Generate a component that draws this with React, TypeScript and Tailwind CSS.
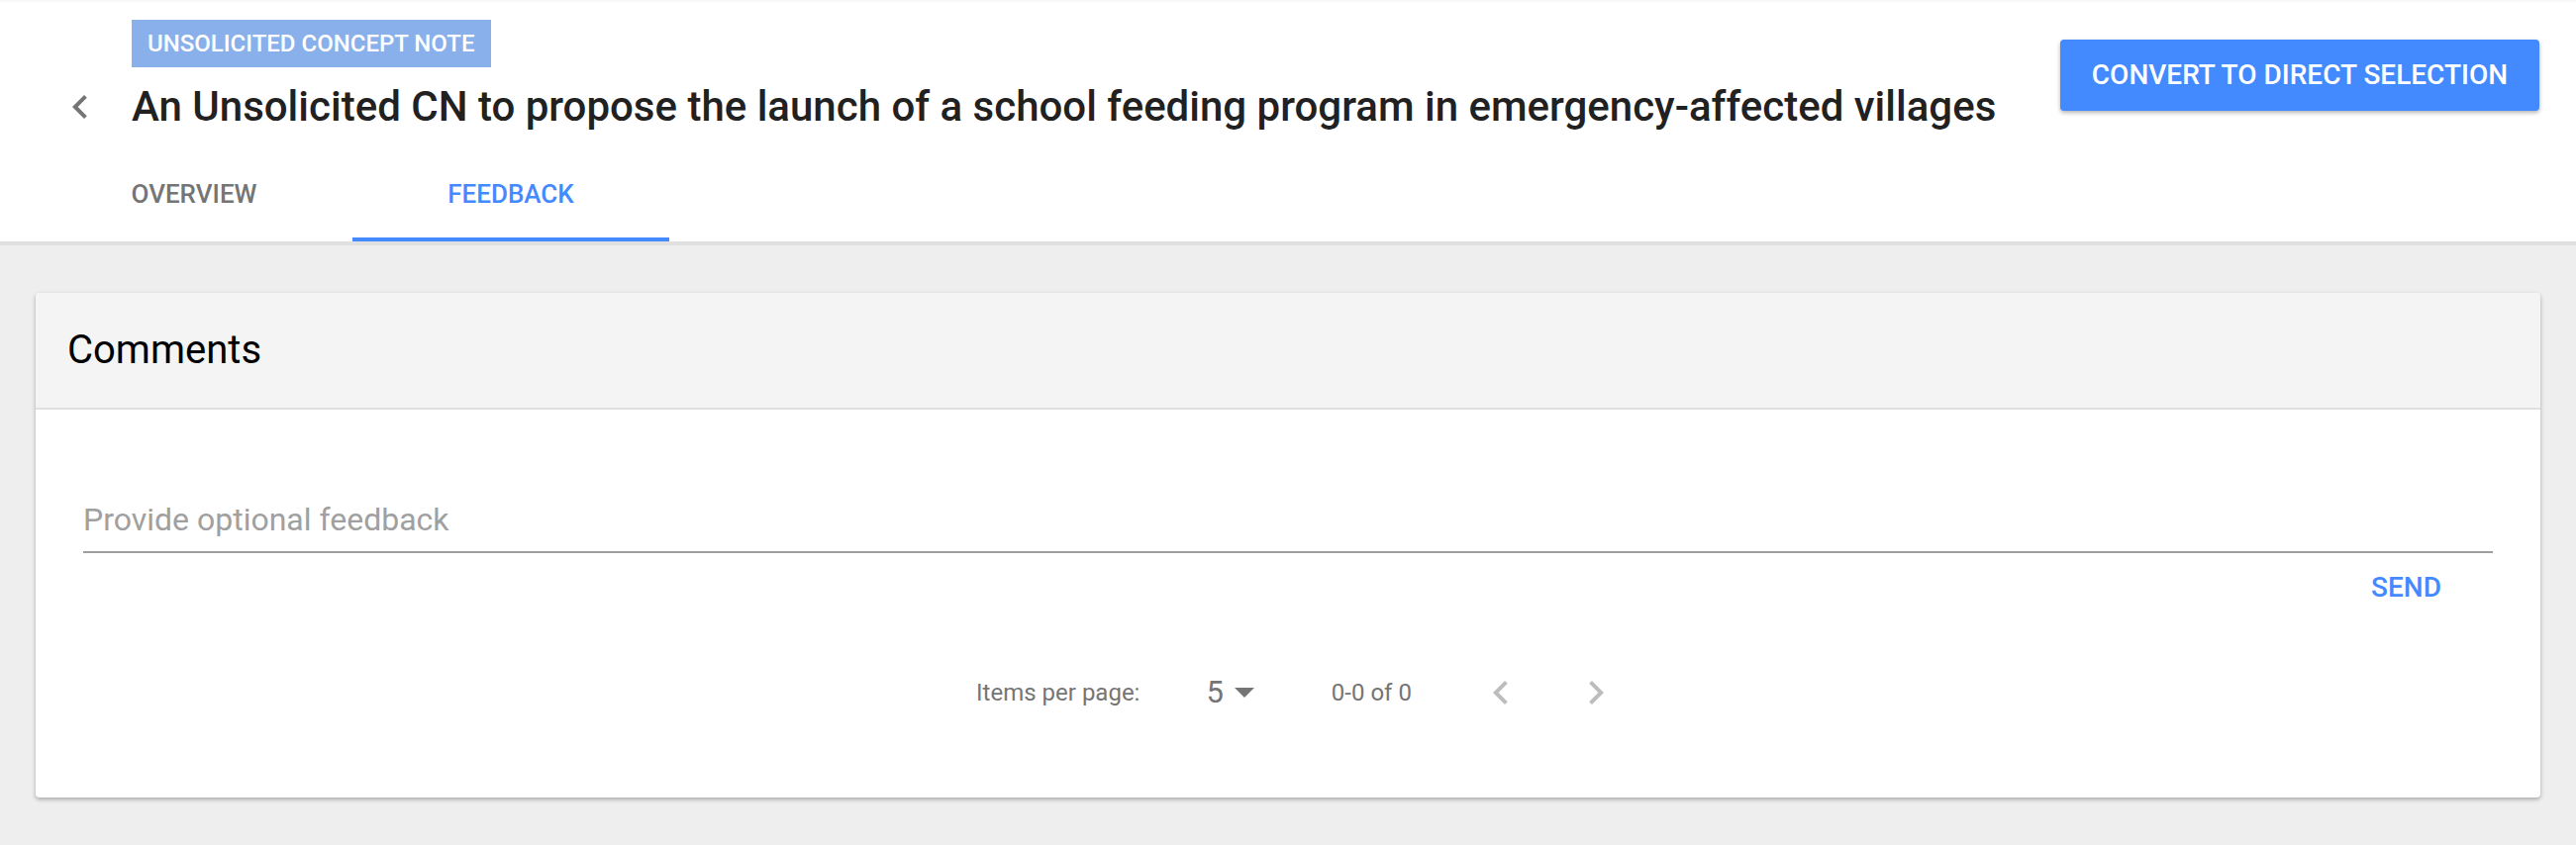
import React from "react";

const ChevronLeft = ({ className = "" }: { className?: string }) => (
  <svg viewBox="0 0 24 24" width="48" height="48" className={className} fill="currentColor">
    <path d="M15.41 7.41L14 6l-6 6 6 6 1.41-1.41L10.83 12z" />
  </svg>
);

const ChevronRight = ({ className = "" }: { className?: string }) => (
  <svg viewBox="0 0 24 24" width="48" height="48" className={className} fill="currentColor">
    <path d="M10 6L8.59 7.41 13.17 12l-4.58 4.59L10 18l6-6z" />
  </svg>
);

export default function App() {
  return (
    <div
      className="w-full h-[854px] bg-[#eeeeee] overflow-hidden"
      style={{ fontFamily: "Roboto, 'Liberation Sans', sans-serif" }}
    >
      <header className="bg-white border-t-2 border-[#f7f7f7] border-b-4 border-b-[#e0e0e0]">
        <div className="flex justify-between">
          <div className="flex flex-col">
            <div className="pl-[133px] pt-[18px]">
              <span className="inline-flex items-center h-[48px] px-[16px] bg-[#89b0ea] text-white text-[24px] font-medium">
                UNSOLICITED CONCEPT NOTE
              </span>
            </div>
            <div className="flex items-center h-[80px]">
              <div className="w-[133px] flex justify-end pr-[28px]">
                <ChevronLeft className="text-[#757575]" />
              </div>
              <h1 className="text-[42px] font-medium text-[#212121] leading-none">
                An Unsolicited CN to propose the launch of a school feeding program in emergency-affected villages
              </h1>
            </div>
          </div>
          <div className="pt-[38px] pr-[37px]">
            <button className="h-[72px] w-[484px] rounded-[4px] bg-[#448aff] text-white text-[28px] font-medium shadow-[0_2px_4px_rgba(0,0,0,0.3)]">
              CONVERT TO DIRECT SELECTION
            </button>
          </div>
        </div>
        <nav className="flex pl-[36px] h-[96px]">
          <div className="w-[320px] flex items-center justify-center text-[26px] font-medium text-[#757575]">
            OVERVIEW
          </div>
          <div className="w-[320px] flex items-center justify-center text-[26px] font-medium text-[#448aff] border-b-4 border-[#448aff] pt-[4px]">
            FEEDBACK
          </div>
        </nav>
      </header>

      <main className="pt-[48px] px-[36px]">
        <div className="bg-white rounded-[4px] shadow-[0_2px_4px_rgba(0,0,0,0.3)] overflow-hidden">
          <div className="h-[118px] bg-[#f4f4f4] border-b-2 border-[#e0e0e0] flex items-center px-[32px]">
            <h2 className="text-[40px] text-black leading-none">Comments</h2>
          </div>
          <div className="px-[48px] pt-[84px]">
            <div className="border-b-2 border-[#9e9e9e] h-[61px] flex items-end pb-[16px]">
              <span className="text-[32px] text-[#a0a0a0] leading-none">Provide optional feedback</span>
            </div>
            <div className="flex justify-end pr-[52px] pt-[21px]">
              <button className="text-[28px] font-medium text-[#448aff] leading-none h-[40px] flex items-start">SEND</button>
            </div>
            <div className="flex items-center justify-center h-[96px] mt-[32px] mb-[58px] pl-[44px] text-[#757575]">
              <span className="text-[24px]">Items per page:</span>
              <div className="flex items-center ml-[67px]">
                <span className="text-[31px]">5</span>
                <svg width="20" height="10" viewBox="0 0 20 10" className="ml-[11px]">
                  <path d="M0 0 L20 0 L10 10 Z" fill="#757575" />
                </svg>
              </div>
              <span className="text-[24px] ml-[78px]">0-0 of 0</span>
              <div className="ml-[42px] w-[96px] h-[96px] flex items-center justify-center text-[#bdbdbd]">
                <ChevronLeft />
              </div>
              <div className="w-[96px] h-[96px] flex items-center justify-center text-[#bdbdbd]">
                <ChevronRight />
              </div>
            </div>
          </div>
        </div>
      </main>
    </div>
  );
}
